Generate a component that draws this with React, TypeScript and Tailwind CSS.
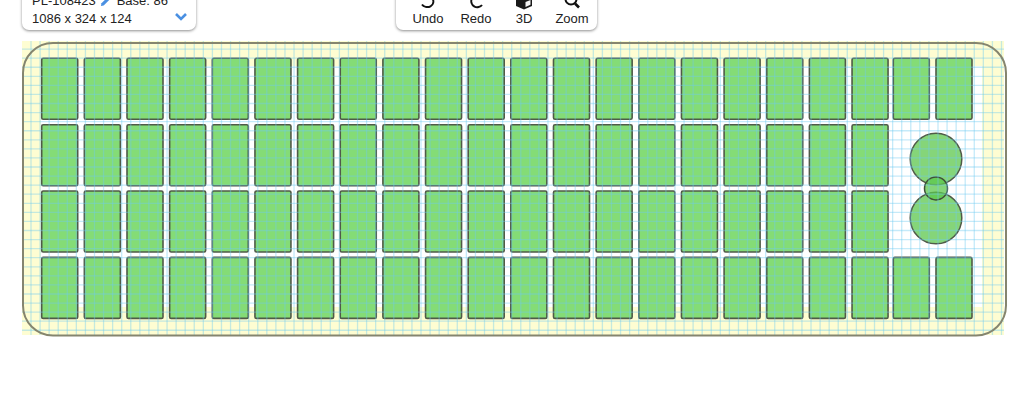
import React from "react";

const rowTops = [58.3, 124.7, 191, 257.4];
const colLefts = Array.from({ length: 20 }, (_, i) => 41.7 + 42.65 * i);
const lastCols = [893.3, 936];

const vLines = Array.from({ length: 108 }, (_, i) => 31 + 9.07 * i).filter((x) => x < 1005);
const hLines = Array.from({ length: 32 }, (_, i) => 49.1 + 9.07 * i).filter((y) => y < 336);

const Cell = ({ x, y }: { x: number; y: number }) => (
  <rect x={x} y={y} width={36} height={61} rx={1.5} fill="#84dc76" stroke="#4f5a48" strokeWidth={1.6} />
);

const Plate = () => (
  <svg width={986} height={297} viewBox="22 41 986 297" className="block blur-[0.5px]">
    <rect x={22} y={41} width={982} height={294} fill="#fefdd2" />
    <rect x={41} y={66} width={941} height={241} fill="#ffffff" />
    {rowTops.map((y, r) => colLefts.map((x) => <Cell key={`${r}-${x}`} x={x} y={y} />))}
    {[rowTops[0], rowTops[3]].map((y) => lastCols.map((x) => <Cell key={`${y}-${x}`} x={x} y={y} />))}
    <circle cx={936} cy={159} r={25.8} fill="#5cc74c" fillOpacity={0.75} stroke="#4f5a48" strokeWidth={1.5} />
    <circle cx={936} cy={218} r={25.8} fill="#5cc74c" fillOpacity={0.75} stroke="#4f5a48" strokeWidth={1.5} />
    <circle cx={936} cy={188.4} r={11.5} fill="#5cc74c" fillOpacity={0.75} stroke="#3f4f38" strokeWidth={1.5} />
    <g stroke="#6ecbf0" strokeOpacity={0.4} strokeWidth={1.3}>
      {vLines.map((x) => <line key={x} x1={x} x2={x} y1={41} y2={335} />)}
      {hLines.map((y) => <line key={y} x1={22} x2={1004} y1={y} y2={y} />)}
    </g>
    <rect x={23} y={43} width={983} height={292.5} rx={30} fill="none" stroke="#85856f" strokeWidth={2} />
  </svg>
);

const ToolIcon = ({ name }: { name: string }) => {
  if (name === "Undo")
    return (
      <svg width={18} height={18} viewBox="0 0 18 18" fill="none" stroke="#111" strokeWidth={2}>
        <path d="M3 12.500c1.500 2.300 5.500 3.400 8.500 1.800 3-1.600 3.500-5 2-8" />
      </svg>
    );
  if (name === "Redo")
    return (
      <svg width={18} height={18} viewBox="0 0 18 18" fill="none" stroke="#111" strokeWidth={2}>
        <path d="M15 13c-1.500 2-5 3-7.500 1.600C4.500 13 3.500 9.500 5 6" />
      </svg>
    );
  if (name === "3D")
    return (
      <svg width={18} height={18} viewBox="0 0 18 18">
        <path d="M1 5l8-3 8 3v9l-8 3.500-8-3.500z" fill="#1a1a1a" />
        <path d="M10.500 15l5-2.200V8l-5 2z" fill="#f4f4f4" />
      </svg>
    );
  return (
    <svg width={18} height={18} viewBox="0 0 18 18" fill="none" stroke="#111" strokeWidth={2}>
      <circle cx={8} cy={7} r={5.500} />
      <path d="M12 11.500l4 4" strokeWidth={2.600} />
    </svg>
  );
};

const tools = [
  { name: "Undo", width: "w-[50px]" },
  { name: "Redo", width: "w-[46px]" },
  { name: "3D", width: "w-[50px]" },
  { name: "Zoom", width: "w-[46px]" },
];

export default function App() {
  return (
    <div className="h-[412px] w-[1024px] overflow-hidden bg-white font-['Liberation_Sans',Arial,sans-serif] text-[13px] text-[#222]">
      <div className="flex h-[41px] items-start pl-[22px]">
        <div className="-mt-[30px] flex h-[60px] w-[174px] flex-col justify-end rounded-[7px] bg-white pb-[2px] pl-[10px] pr-[8px] leading-[18px] shadow-[0_1px_3px_rgba(0,0,0,0.45)]">
          <div className="flex items-center">
            <span>PL-108423</span>
            <svg width={11} height={11} viewBox="0 0 12 12" className="ml-[4px]">
              <path d="M1 11l.6-3L8 1.600 10.400 4 4 10.400z" fill="#4a90e2" />
            </svg>
            <span className="ml-[6px]">Base: 86</span>
          </div>
          <div className="flex items-center justify-between">
            <span>1086 x 324 x 124</span>
            <svg width={14} height={10} viewBox="0 0 14 10" fill="none" stroke="#4a90e2" strokeWidth={2.600} className="-mt-[5px]">
              <path d="M2 2l5 5 5-5" />
            </svg>
          </div>
        </div>
        <div className="-mt-[30px] ml-[200px] flex h-[60px] w-[201px] items-end rounded-[7px] bg-white pb-[2px] pl-[7px] shadow-[0_1px_3px_rgba(0,0,0,0.45)]">
          {tools.map((t) => (
            <div key={t.name} className={`flex flex-col items-center leading-[18px] ${t.width}`}>
              <ToolIcon name={t.name} />
              <span>{t.name}</span>
            </div>
          ))}
        </div>
      </div>
      <div className="pl-[22px]">
        <Plate />
      </div>
    </div>
  );
}
